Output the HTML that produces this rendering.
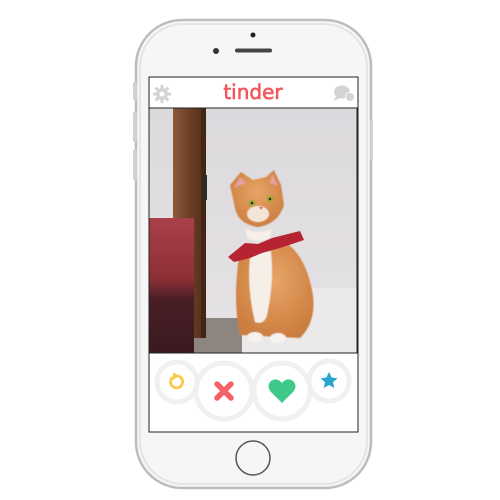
<!DOCTYPE html>
<html><head><style>
html,body{margin:0;padding:0;background:#fff;width:500px;height:500px;overflow:hidden}
</style></head><body>
<svg width="500" height="500" viewBox="0 0 500 500" xmlns="http://www.w3.org/2000/svg">
<defs>
<linearGradient id="wall" x1="0" y1="0" x2="0" y2="1"><stop offset="0" stop-color="#dcd9dd"/><stop offset="1" stop-color="#e6e3e6"/></linearGradient>
<linearGradient id="post" x1="0" y1="0" x2="1" y2="0"><stop offset="0" stop-color="#8a5a3c"/><stop offset="0.5" stop-color="#6e3f25"/><stop offset="1" stop-color="#4e2b1a"/></linearGradient>
<linearGradient id="chair" x1="0" y1="0" x2="0" y2="1"><stop offset="0" stop-color="#a8404a"/><stop offset="0.45" stop-color="#8e2f38"/><stop offset="0.6" stop-color="#4a1e26"/><stop offset="1" stop-color="#3a1a20"/></linearGradient>
<radialGradient id="fur" cx="0.5" cy="0.4" r="0.6"><stop offset="0" stop-color="#e8a566"/><stop offset="1" stop-color="#cc7e40"/></radialGradient>
<filter id="b"><feGaussianBlur stdDeviation="0.6"/></filter>
</defs>
<rect x="136" y="20" width="235" height="468" rx="46" fill="#f6f6f6" stroke="#bdbdbd" stroke-width="2.5"/>
<rect x="140" y="24" width="227" height="460" rx="43" fill="none" stroke="#e4e4e4" stroke-width="2"/>
<rect x="133" y="82" width="4" height="18" rx="1" fill="#d0d0d0"/>
<rect x="133" y="112" width="4" height="30" rx="1" fill="#d0d0d0"/>
<rect x="133" y="150" width="4" height="30" rx="1" fill="#d0d0d0"/>
<rect x="370" y="120" width="3" height="40" rx="1" fill="#d0d0d0"/>
<circle cx="253" cy="35" r="2.5" fill="#222"/>
<circle cx="216" cy="51" r="3" fill="#333"/>
<rect x="235" y="48.5" width="37" height="4" rx="2" fill="#444"/>
<rect x="149" y="77" width="209" height="355" fill="#fff" stroke="#222" stroke-width="1"/>
<text x="253" y="99" text-anchor="middle" font-family="DejaVu Sans, sans-serif" font-size="20" fill="#f2575b" stroke="#f2575b" stroke-width="0.6">tinder</text>
<g fill="#d4d4d4">
<circle cx="162" cy="94" r="6"/>
<g stroke="#d4d4d4" stroke-width="3">
<line x1="162" y1="85" x2="162" y2="103"/><line x1="153" y1="94" x2="171" y2="94"/>
<line x1="155.6" y1="87.6" x2="168.4" y2="100.4"/><line x1="168.4" y1="87.6" x2="155.6" y2="100.4"/>
</g>
<circle cx="162" cy="94" r="2.5" fill="#fff"/>
</g>
<g fill="#d4d4d4">
<ellipse cx="342" cy="92" rx="8" ry="6.5"/>
<path d="M336 96 L334 101 L340 98Z"/>
<circle cx="350" cy="97" r="5" fill="#fff"/>
<circle cx="350" cy="97" r="4"/>
</g>
<g>
<rect x="149" y="108" width="208" height="245" fill="url(#wall)"/>
<rect x="241" y="288" width="116" height="65" fill="#ebe9ea"/>
<rect x="190" y="318" width="52" height="35" fill="#8d8580"/>
<rect x="173" y="108" width="33" height="230" fill="url(#post)"/>
<rect x="201" y="108" width="5" height="230" fill="#3a2014" opacity="0.6"/>
<rect x="203" y="175" width="4" height="25" fill="#2a2a2a"/>
<rect x="149" y="218" width="45" height="135" fill="url(#chair)"/>
<g filter="url(#b)">
<path d="M240 250 Q232 300 240 335 L300 338 Q318 320 312 290 Q305 255 285 242 Z" fill="url(#fur)"/>
<path d="M252 245 Q245 280 255 322 Q266 326 268 310 Q275 275 270 245Z" fill="#f6efe8"/>
<ellipse cx="255" cy="337" rx="8" ry="5" fill="#f6f2ee"/>
<ellipse cx="278" cy="338" rx="8" ry="5" fill="#f6f2ee"/>
<path d="M230 185 L241 172 L253 180 L266 177 L274 170 L281 185 L284 205 Q278 224 258 227 Q238 224 235 208Z" fill="url(#fur)"/>
<path d="M234 188 L240 177 L246 183Z" fill="#e6a0a0"/>
<path d="M272 174 L278 186 L270 183Z" fill="#e6a0a0"/>
<ellipse cx="258" cy="214" rx="11" ry="8" fill="#f3e6d8"/>
<path d="M245 228 Q258 236 272 228 L270 238 Q258 244 247 238Z" fill="#f6efe8"/>
</g>
<circle cx="252" cy="203" r="3.5" fill="#a6a23a"/>
<circle cx="270" cy="199" r="3.5" fill="#a6a23a"/>
<circle cx="252" cy="203" r="1.2" fill="#222"/>
<circle cx="270" cy="199" r="1.2" fill="#222"/>
<path d="M259 207 l4 0 l-2 3z" fill="#d07a7a"/>
<path d="M228 257 L245 243 L258 244 L272 238 L300 231 L304 240 L280 248 L262 253 L250 258 L234 262Z" fill="#b52430"/>
</g>
<rect x="149" y="108" width="208" height="245" fill="none" stroke="#222" stroke-width="1"/>
<g fill="#fff" stroke="#f0f0f0" stroke-width="5">
<circle cx="177" cy="382" r="20"/>
<circle cx="329" cy="381" r="20"/>
<circle cx="224" cy="391" r="28"/>
<circle cx="282" cy="391" r="28"/>
</g>
<path d="M172 378 A6 6 0 1 0 178 376" fill="none" stroke="#fbc94a" stroke-width="2.8" stroke-linecap="round"/>
<path d="M173 372 L179 376 L173 380Z" fill="#fbc94a"/>
<g stroke="#f56164" stroke-width="5.5" stroke-linecap="round">
<line x1="217" y1="384" x2="231" y2="398"/><line x1="231" y1="384" x2="217" y2="398"/>
</g>
<path d="M282 403 L271 392 Q266 386 271 381 Q277 377 282 383 Q287 377 293 381 Q298 386 293 392Z" fill="#3ec98a"/>
<path d="M329 372 L331.6 377.5 L337.5 378.2 L333 382.2 L334.3 388 L329 385 L323.7 388 L325 382.2 L320.5 378.2 L326.4 377.5Z" fill="#2aa4d1"/>
<circle cx="253" cy="458" r="17" fill="#f6f6f6" stroke="#555" stroke-width="1.5"/>
</svg>
</body></html>
